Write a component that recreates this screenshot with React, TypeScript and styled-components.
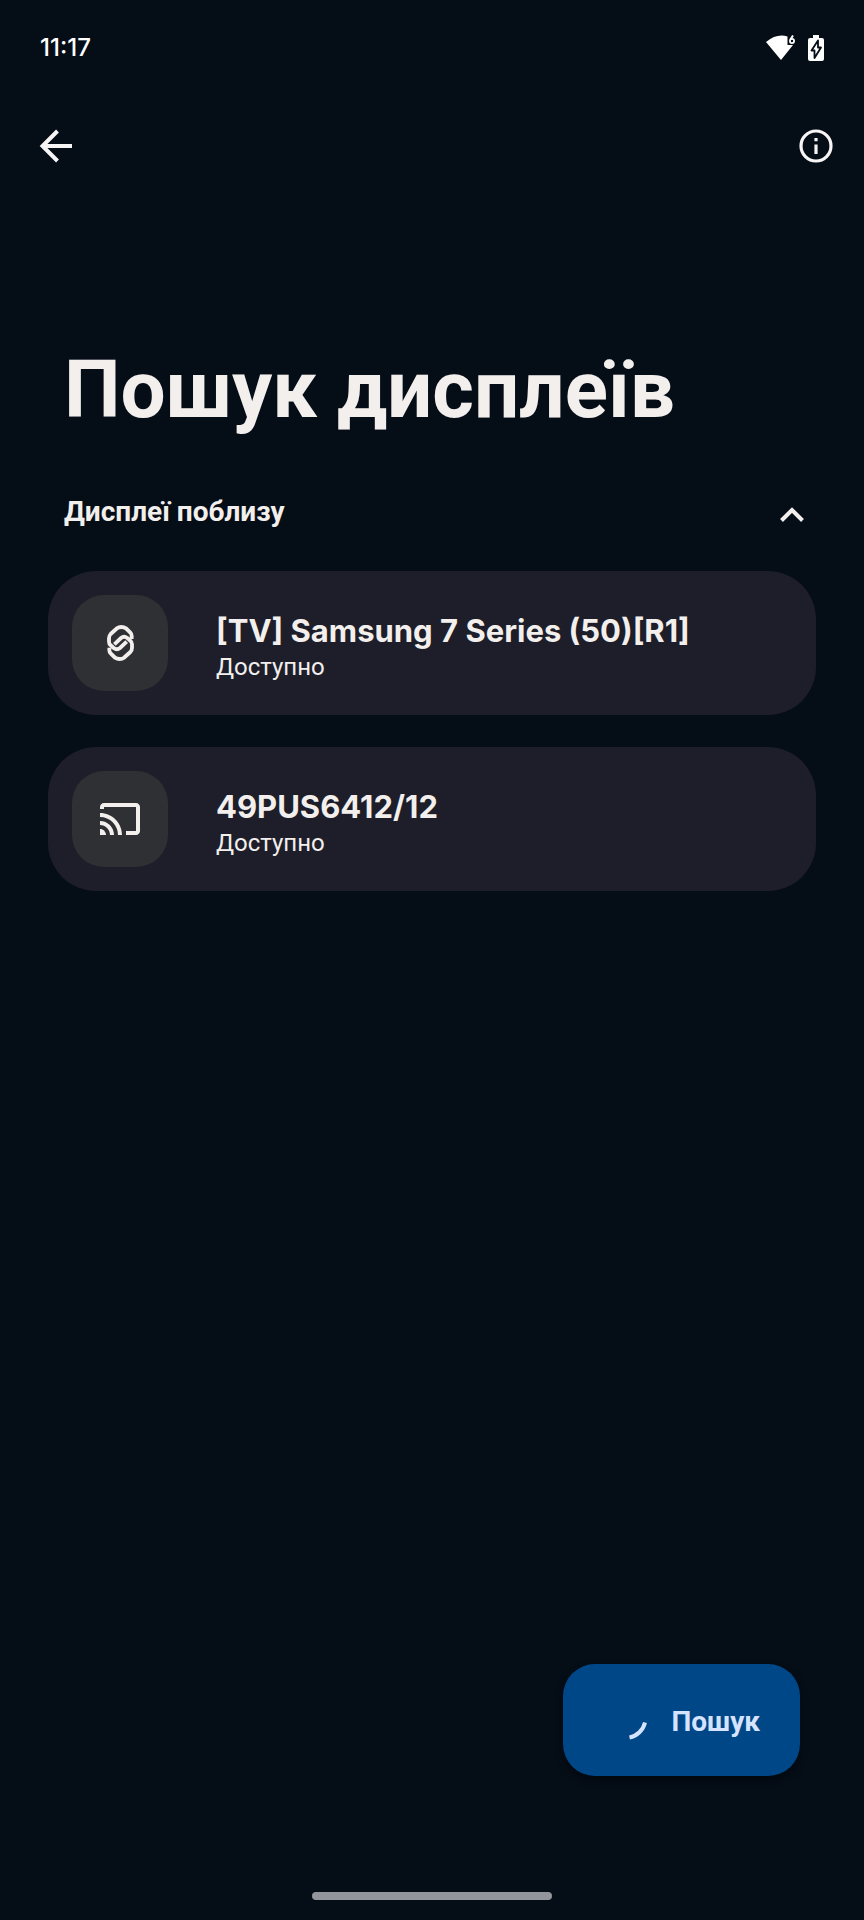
import React from "react";
import styled, { createGlobalStyle } from "styled-components";

const GlobalStyle = createGlobalStyle`
  *, *::before, *::after { box-sizing: border-box; }
  body {
    margin: 0;
    background: #050d17;
    color: #f2efed;
    font-family: Roboto, "Noto Sans", sans-serif;
  }
`;

const Screen = styled.div`
  min-height: 100vh;
  display: flex;
  flex-direction: column;
`;

const StatusBar = styled.header`
  display: flex;
  align-items: center;
  justify-content: space-between;
  height: 96px;
  padding: 0 40px;
  color: #fff;
`;

const Clock = styled.time`
  font: 500 24px/32px Inter, sans-serif;
`;

const StatusIcons = styled.div`
  display: flex;
  align-items: center;
  gap: 12px;
`;

const Toolbar = styled.nav`
  display: flex;
  align-items: center;
  justify-content: space-between;
  height: 100px;
  padding: 0 20px 0 28px;
`;

const IconButton = styled.button`
  display: grid;
  place-items: center;
  width: 56px;
  height: 56px;
  padding: 0;
  border: 0;
  background: none;
  color: #f6f4f4;
`;

const Main = styled.main`
  flex: 1;
  display: flex;
  flex-direction: column;
  padding: 146px 48px 0;
`;

const Title = styled.h1`
  margin: 0 16px;
  font-size: 80px;
  line-height: 96px;
  font-weight: 700;
`;

const SectionToggle = styled.button`
  display: flex;
  align-items: center;
  justify-content: space-between;
  height: 64px;
  margin: 42px 0 27px;
  padding: 0 8px 0 16px;
  border: 0;
  background: none;
  color: inherit;
  font: 700 28px/32px Roboto, sans-serif;
`;

const DeviceList = styled.ul`
  display: grid;
  gap: 32px;
  margin: 0;
  padding: 0;
  list-style: none;
`;

const DeviceCard = styled.button`
  display: flex;
  align-items: center;
  gap: 48px;
  width: 100%;
  height: 144px;
  padding: 24px;
  border: 0;
  border-radius: 48px;
  background: #1d1e29;
  color: inherit;
  text-align: left;
`;

const DeviceIcon = styled.span`
  flex: none;
  display: grid;
  place-items: center;
  width: 96px;
  height: 96px;
  border-radius: 32px;
  background: #2f3033;
`;

const DeviceText = styled.span`
  display: grid;
  padding-top: 8px;
`;

const DeviceName = styled.span`
  font: 700 31px/40px Inter, sans-serif;
`;

const DeviceState = styled.span`
  font: 400 24px/32px Roboto, sans-serif;
`;

const Footer = styled.footer`
  display: flex;
  flex-direction: column;
  align-items: center;
  gap: 116px;
  padding: 0 64px 20px;
`;

const SearchButton = styled.button`
  align-self: flex-end;
  display: flex;
  align-items: center;
  gap: 16px;
  height: 112px;
  padding: 4px 40px 0 44px;
  border: 0;
  border-radius: 32px;
  background: #004788;
  box-shadow: 0 4px 8px rgba(0, 0, 0, 0.4);
  color: #d5e3ff;
  font: 700 28px/32px Roboto, sans-serif;
`;

const HomeHandle = styled.div`
  width: 240px;
  height: 8px;
  border-radius: 4px;
  background: #93959c;
`;

const WifiIcon = () => (
  <svg width="30" height="28" viewBox="0 0 30 28" aria-hidden="true">
    <path fill="currentColor" d="M0 8 Q11 -1 21.500 2.500 V11 H27 L15 26 Z" />
    <path fill="none" stroke="currentColor" strokeWidth="2" d="M27 1.500 L24.400 5.500" />
    <circle cx="26" cy="7" r="2.100" fill="none" stroke="currentColor" strokeWidth="1.800" />
  </svg>
);

const BatteryIcon = () => (
  <svg width="16" height="28" viewBox="0 0 16 28" aria-hidden="true">
    <path fill="currentColor" d="M5 1h6v3h3a2 2 0 0 1 2 2v19a2 2 0 0 1-2 2H2a2 2 0 0 1-2-2V6a2 2 0 0 1 2-2h3z" />
    <path fill="#fff" stroke="#050d17" strokeWidth="1.800" strokeLinejoin="round" d="M10 6.500 3.500 16.500H6.500V24L13 13.500H10z" />
  </svg>
);

const BackIcon = () => (
  <svg width="34" height="34" viewBox="0 0 34 34" fill="none" stroke="currentColor" strokeWidth="4" aria-hidden="true">
    <path d="M18.500 2 3.500 17l15 15M3.500 17H33" />
  </svg>
);

const InfoIcon = () => (
  <svg width="34" height="34" viewBox="0 0 34 34" fill="none" stroke="currentColor" strokeWidth="3.200" aria-hidden="true">
    <circle cx="17" cy="17" r="15" />
    <path d="M17 15.500v9.500M17 9v3.200" />
  </svg>
);

const ChevronIcon = () => (
  <svg width="32" height="32" viewBox="0 0 32 32" fill="none" stroke="currentColor" strokeWidth="4" aria-hidden="true">
    <path d="m5.500 24.500 10.500-10.500 10.500 10.500" />
  </svg>
);

const SmartViewIcon = () => (
  <svg width="27" height="36" viewBox="0 0 81 108" fill="none" stroke="currentColor" strokeWidth="11.500" aria-hidden="true">
    <path d="M74 42V32Q74 27 70 23L57 10Q51 6 43 6Q35 6 30 10L11 27Q6 32 6 40V50Q6 57 11 61L20 69Q30 76 39 69L59 50" />
    <path d="M7 68V76Q7 81 11 85L24 98Q30 102 38 102Q46 102 51 98L70 81Q75 76 75 68V58Q75 51 70 47L61 39Q51 32 42 39L22 58" />
  </svg>
);

const CastIcon = () => (
  <svg width="48" height="48" viewBox="0 0 24 24" fill="currentColor" aria-hidden="true">
    <path d="M20 4H4c-1.100 0-2 .9-2 2v1h2V6h16v12h-5v2h5c1.100 0 2-.9 2-2V6c0-1.100-.9-2-2-2zM2 17v3h3c0-1.660-1.340-3-3-3zm0-4v2c2.760 0 5 2.240 5 5h2c0-3.870-3.130-7-7-7zm0-4v2c4.970 0 9 4.030 9 9h2c0-6.080-4.930-11-11-11z" />
  </svg>
);

const SpinnerIcon = () => (
  <svg width="48" height="48" viewBox="0 0 48 48" fill="none" stroke="currentColor" strokeWidth="4" aria-hidden="true">
    <path d="M38 24.500A20 20 0 0 1 22.500 39.500" />
  </svg>
);

const devices = [
  { name: "[TV] Samsung 7 Series (50)[R1]", state: "Доступно", Icon: SmartViewIcon },
  { name: "49PUS6412/12", state: "Доступно", Icon: CastIcon },
];

export default function App() {
  return (
    <Screen>
      <GlobalStyle />
      <StatusBar>
        <Clock>11:17</Clock>
        <StatusIcons>
          <WifiIcon />
          <BatteryIcon />
        </StatusIcons>
      </StatusBar>
      <Toolbar>
        <IconButton type="button" aria-label="Назад"><BackIcon /></IconButton>
        <IconButton type="button" aria-label="Інформація"><InfoIcon /></IconButton>
      </Toolbar>
      <Main>
        <Title>Пошук дисплеїв</Title>
        <SectionToggle type="button" aria-expanded="true">
          Дисплеї поблизу
          <ChevronIcon />
        </SectionToggle>
        <DeviceList>
          {devices.map(({ name, state, Icon }) => (
            <li key={name}>
              <DeviceCard type="button">
                <DeviceIcon><Icon /></DeviceIcon>
                <DeviceText>
                  <DeviceName>{name}</DeviceName>
                  <DeviceState>{state}</DeviceState>
                </DeviceText>
              </DeviceCard>
            </li>
          ))}
        </DeviceList>
      </Main>
      <Footer>
        <SearchButton type="button">
          <SpinnerIcon />
          Пошук
        </SearchButton>
        <HomeHandle />
      </Footer>
    </Screen>
  );
}
